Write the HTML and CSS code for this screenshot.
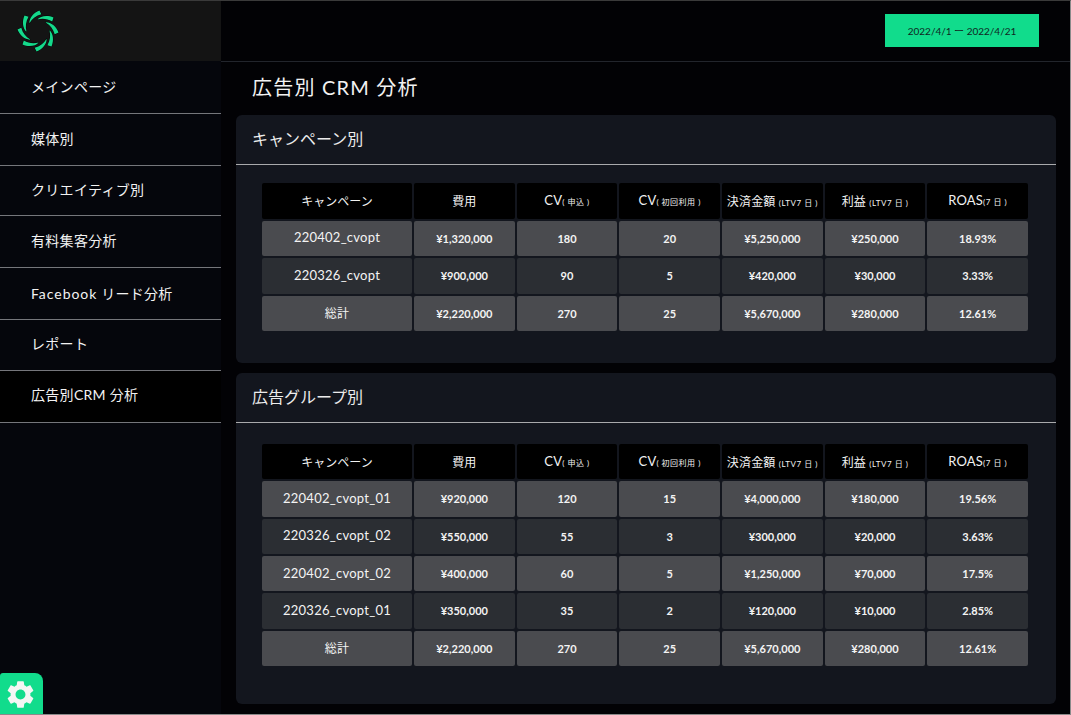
FILE: index.html
```html
<!DOCTYPE html>
<html lang="ja">
<head>
<meta charset="utf-8">
<title>広告別 CRM 分析</title>
<link rel="stylesheet" href="styles.css">
</head>
<body>
<div class="app">
  <aside class="sidebar">
    <div class="logo-box">
      <svg class="logo" viewBox="-22 -22 44 44" aria-hidden="true">
        <defs>
          <path id="blade" d="M-9 -8C-9.5 -13 -5 -19 1.5 -21.5L3.5 -17.5C-2 -16 -6 -13 -9 -8Z"/>
        </defs>
        <g class="logo-blades">
          <use href="#blade"/>
          <use href="#blade" transform="rotate(45)"/>
          <use href="#blade" transform="rotate(90)"/>
          <use href="#blade" transform="rotate(135)"/>
          <use href="#blade" transform="rotate(180)"/>
          <use href="#blade" transform="rotate(225)"/>
          <use href="#blade" transform="rotate(270)"/>
          <use href="#blade" transform="rotate(315)"/>
        </g>
      </svg>
    </div>
    <nav class="nav">
      <a class="nav-item nav-item-first">メインページ</a>
      <a class="nav-item">媒体別</a>
      <a class="nav-item nav-item-short">クリエイティブ別</a>
      <a class="nav-item">有料集客分析</a>
      <a class="nav-item nav-item-fb"><span class="latin">Facebook</span>&nbsp;リード分析</a>
      <a class="nav-item nav-item-mid">レポート</a>
      <a class="nav-item nav-item-active">広告別CRM 分析</a>
    </nav>
    <button class="settings" aria-label="設定">
      <svg viewBox="0 0 24 24" class="gear" aria-hidden="true"><path d="M19.14 12.94c.04-.3.06-.61.06-.94 0-.32-.02-.64-.07-.94l2.03-1.58c.18-.14.23-.41.12-.61l-1.92-3.32c-.12-.22-.37-.29-.59-.22l-2.39.96c-.5-.38-1.03-.7-1.62-.94l-.36-2.54c-.04-.24-.24-.41-.48-.41h-3.84c-.24 0-.43.17-.47.41l-.36 2.54c-.59.24-1.13.57-1.62.94l-2.39-.96c-.22-.08-.47 0-.59.22L2.74 8.87c-.12.21-.08.47.12.61l2.03 1.58c-.05.3-.09.63-.09.94s.02.64.07.94l-2.03 1.58c-.18.14-.23.41-.12.61l1.92 3.32c.12.22.37.29.59.22l2.39-.96c.5.38 1.03.7 1.62.94l.36 2.54c.05.24.24.41.48.41h3.84c.24 0 .44-.17.47-.41l.36-2.54c.59-.24 1.13-.56 1.62-.94l2.39.96c.22.08.47 0 .59-.22l1.92-3.32c.12-.22.07-.47-.12-.61l-2.01-1.58zM12 15.6c-1.98 0-3.6-1.62-3.6-3.6s1.62-3.6 3.6-3.6 3.6 1.62 3.6 3.6-1.62 3.6-3.6 3.6z"/></svg>
    </button>
  </aside>
  <main class="main">
    <header class="topbar">
      <div class="date-btn">2022/4/1 ー 2022/4/21</div>
    </header>
    <h1 class="page-title">広告別 CRM 分析</h1>
    <section class="card card-a">
      <h2 class="card-title">キャンペーン別</h2>
      <div class="grid grid-a">
        <div class="th">キャンペーン</div><div class="th">費用</div>
        <div class="th"><span>CV<small>( 申込 )</small></span></div>
        <div class="th"><span>CV<small>( 初回利用 )</small></span></div>
        <div class="th"><span class="cjk">決済金額 <small>(LTV7 日 )</small></span></div>
        <div class="th"><span class="cjk">利益 <small>(LTV7 日 )</small></span></div>
        <div class="th"><span>ROAS<small>(7 日 )</small></span></div>

        <div class="td name light">220402_cvopt</div><div class="td light">¥1,320,000</div><div class="td light">180</div><div class="td light">20</div><div class="td light">¥5,250,000</div><div class="td light">¥250,000</div><div class="td light">18.93%</div>
        <div class="td name dark">220326_cvopt</div><div class="td dark">¥900,000</div><div class="td dark">90</div><div class="td dark">5</div><div class="td dark">¥420,000</div><div class="td dark">¥30,000</div><div class="td dark">3.33%</div>
        <div class="td name light total">総計</div><div class="td light">¥2,220,000</div><div class="td light">270</div><div class="td light">25</div><div class="td light">¥5,670,000</div><div class="td light">¥280,000</div><div class="td light">12.61%</div>
      </div>
    </section>
    <section class="card card-b">
      <h2 class="card-title">広告グループ別</h2>
      <div class="grid grid-b">
        <div class="th">キャンペーン</div><div class="th">費用</div>
        <div class="th"><span>CV<small>( 申込 )</small></span></div>
        <div class="th"><span>CV<small>( 初回利用 )</small></span></div>
        <div class="th"><span class="cjk">決済金額 <small>(LTV7 日 )</small></span></div>
        <div class="th"><span class="cjk">利益 <small>(LTV7 日 )</small></span></div>
        <div class="th"><span>ROAS<small>(7 日 )</small></span></div>

        <div class="td name light">220402_cvopt_01</div><div class="td light">¥920,000</div><div class="td light">120</div><div class="td light">15</div><div class="td light">¥4,000,000</div><div class="td light">¥180,000</div><div class="td light">19.56%</div>
        <div class="td name dark">220326_cvopt_02</div><div class="td dark">¥550,000</div><div class="td dark">55</div><div class="td dark">3</div><div class="td dark">¥300,000</div><div class="td dark">¥20,000</div><div class="td dark">3.63%</div>
        <div class="td name light">220402_cvopt_02</div><div class="td light">¥400,000</div><div class="td light">60</div><div class="td light">5</div><div class="td light">¥1,250,000</div><div class="td light">¥70,000</div><div class="td light">17.5%</div>
        <div class="td name dark">220326_cvopt_01</div><div class="td dark">¥350,000</div><div class="td dark">35</div><div class="td dark">2</div><div class="td dark">¥120,000</div><div class="td dark">¥10,000</div><div class="td dark">2.85%</div>
        <div class="td name light total">総計</div><div class="td light">¥2,220,000</div><div class="td light">270</div><div class="td light">25</div><div class="td light">¥5,670,000</div><div class="td light">¥280,000</div><div class="td light">12.61%</div>
      </div>
    </section>
  </main>
</div>
</body>
</html>
```

FILE: styles.css
```css
* { box-sizing: border-box; }
html, body { margin: 0; height: 100%; }
body {
  background: #020205;
  color: #f2f2f2;
  font-family: Lato, "Noto Sans CJK JP", "Noto Sans", sans-serif;
  overflow: hidden;
}
.app {
  display: flex;
  width: 1071px;
  height: 715px;
  border-top: 1px solid #3a3a3a;
  border-right: 1px solid #8a8a8a;
  border-bottom: 1px solid #8a8a8a;
  overflow: hidden;
}
.sidebar {
  position: relative;
  flex: 0 0 221px;
  display: flex;
  flex-direction: column;
  background: #05060c;
}
.logo-box {
  height: 60px;
  background: #141414;
  display: flex;
  align-items: center;
  padding-left: 17px;
}
.logo { width: 42px; height: 42px; display: block; }
.logo-blades { fill: #14d98b; stroke: #000; stroke-width: 0.8; paint-order: stroke; }
.nav { display: flex; flex-direction: column; }
.nav-item {
  height: 52px;
  display: flex;
  align-items: center;
  padding-left: 31px;
  padding-bottom: 3px;
  font-size: 14px;
  letter-spacing: 0.3px;
  color: #f2f2f2;
  border-bottom: 1px solid #75767b;
}
.nav-item-first { height: 53px; }
.nav-item-short { height: 50px; }
.nav-item-mid { height: 51px; padding-bottom: 4px; }
.nav-item-active { background: #000; padding-bottom: 5px; }
.nav-item-fb { padding-bottom: 1px; }
.latin { letter-spacing: 0.95px; }
.settings {
  position: absolute;
  left: 0;
  bottom: 0;
  width: 43px;
  height: 41px;
  border: 0;
  padding: 1px 3px 0 0;
  background: #11dc8c;
  border-radius: 3px 8px 0 0;
  display: flex;
  align-items: center;
  justify-content: center;
}
.gear { width: 33px; height: 33px; fill: #f3f6f4; }
.main {
  flex: 1;
  min-width: 0;
  background: #020205;
  display: flex;
  flex-direction: column;
}
.topbar {
  height: 61px;
  flex: none;
  border-bottom: 1px solid #22252c;
  display: flex;
  justify-content: flex-end;
  align-items: flex-start;
  padding: 13px 31px 0 0;
}
.date-btn {
  width: 154px;
  height: 33px;
  background: #11dc8c;
  color: #10261f;
  font-size: 10px;
  display: flex;
  align-items: center;
  justify-content: center;
}
.page-title {
  margin: 0;
  height: 53px;
  padding-left: 31px;
  padding-bottom: 4px;
  display: flex;
  align-items: center;
  font-size: 20px;
  font-weight: 400;
  letter-spacing: 1.2px;
  color: #f2f2f2;
}
.card {
  margin: 0 14px 10px 15px;
  background: #13161e;
  border-radius: 6px;
  flex: none;
}
.card-a { height: 248px; }
.card-b { height: 331px; }
.card-title {
  margin: 0;
  height: 50px;
  padding-left: 16px;
  padding-bottom: 3px;
  display: flex;
  align-items: center;
  font-size: 16px;
  font-weight: 400;
  color: #ececec;
  border-bottom: 1px solid #a9aaac;
}
.grid {
  display: grid;
  grid-template-columns: 150px repeat(6, 1fr);
  gap: 2px;
  margin-left: 26px;
  margin-right: 28px;
}
.grid-a { margin-top: 18px; grid-auto-rows: 35.5px; }
.grid-b { margin-top: 21px; grid-auto-rows: 35.33px; }
.th, .td {
  display: flex;
  align-items: center;
  justify-content: center;
  border-radius: 2px;
  white-space: nowrap;
}
.th {
  background: #000;
  font-size: 12px;
  color: #f2f2f2;
  padding-bottom: 1px;
}
.th span { font-size: 13px; letter-spacing: 0.2px; }
.th span.cjk { font-size: 12px; letter-spacing: 0.2px; }
.th small { font-size: 8px; letter-spacing: 0.5px; }
.td {
  font-size: 11px;
  font-weight: 700;
  color: #f4f4f4;
}
.td.name {
  font-size: 13px;
  font-weight: 400;
  letter-spacing: 0.25px;
  padding-bottom: 2px;
}
.td.total { font-size: 12px; }
.light { background: #4a4b4f; }
.dark { background: #2b2e33; }
```
